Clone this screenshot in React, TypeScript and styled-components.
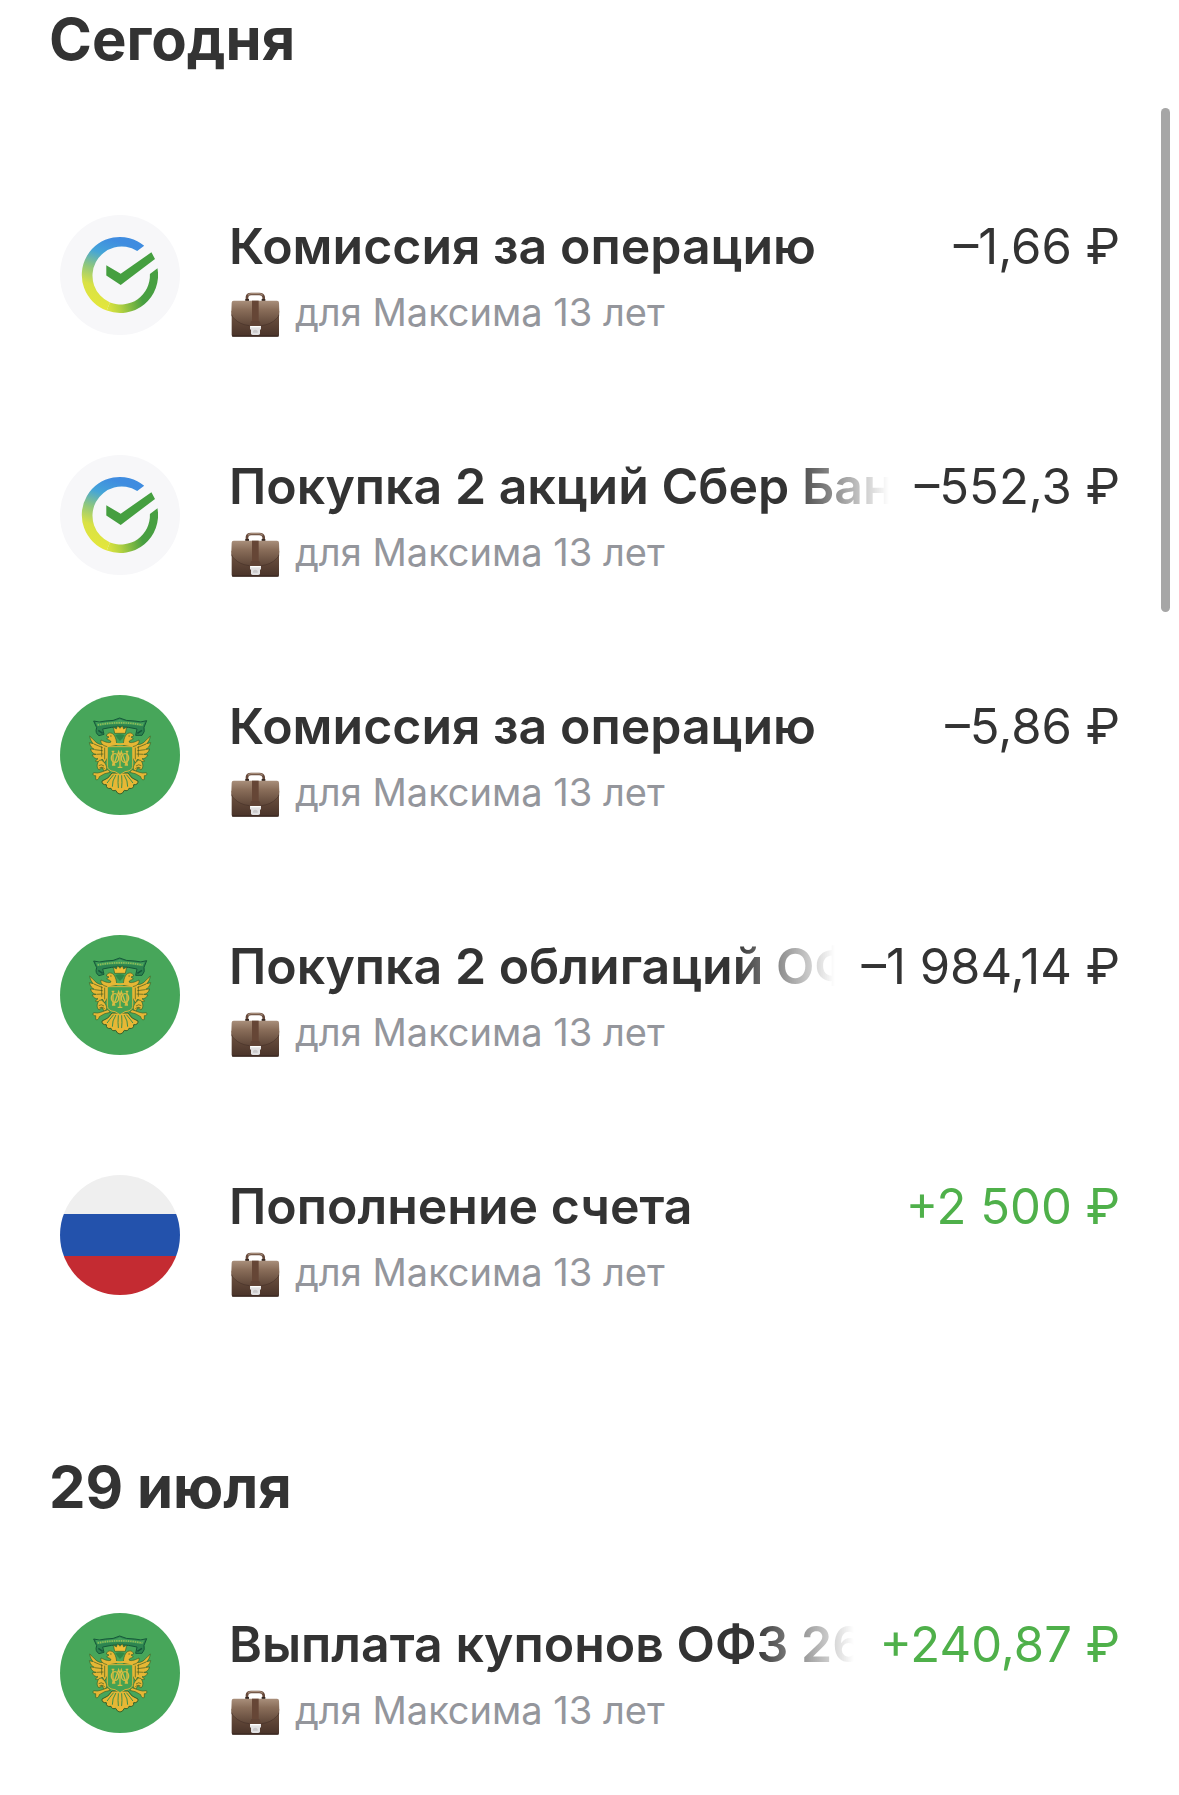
import React from 'react';
import styled, { createGlobalStyle } from 'styled-components';

type LogoKind = 'sber' | 'minfin' | 'flag';

interface Operation {
  id: number;
  logo: LogoKind;
  title: string;
  amount: string;
  income?: boolean;
  long?: boolean;
}

const today: Operation[] = [
  { id: 1, logo: 'sber', title: 'Комиссия за операцию', amount: '–1,66 ₽' },
  { id: 2, logo: 'sber', title: 'Покупка 2 акций Сбер Бан', amount: '–552,3 ₽', long: true },
  { id: 3, logo: 'minfin', title: 'Комиссия за операцию', amount: '–5,86 ₽' },
  { id: 4, logo: 'minfin', title: 'Покупка 2 облигаций ОФ', amount: '–1 984,14 ₽', long: true },
  { id: 5, logo: 'flag', title: 'Пополнение счета', amount: '+2 500 ₽', income: true },
];

const july: Operation[] = [
  { id: 6, logo: 'minfin', title: 'Выплата купонов ОФЗ 26', amount: '+240,87 ₽', income: true, long: true },
];

const GlobalStyle = createGlobalStyle`
  * {
    box-sizing: border-box;
  }

  body {
    margin: 0;
    background: #fff;
    color: #333;
    font-family: Inter, 'Liberation Sans', sans-serif;
  }
`;

const Page = styled.main`
  padding: 0 59px 0 49px;
`;

const Section = styled.section`
  & + & {
    margin-top: 93px;
  }
`;

const DateTitle = styled.h2<{ $gap: number }>`
  margin: 0 0 ${({ $gap }) => $gap}px;
  font-size: 58px;
  line-height: 78px;
  font-weight: 700;
`;

const List = styled.ul`
  margin: 0;
  padding: 0 0 0 11px;
  list-style: none;
`;

const Row = styled.li`
  display: flex;
  gap: 49px;
  padding: 60px 0 58px;
`;

const Avatar = styled.svg`
  flex: none;
  width: 120px;
  height: 120px;
  border-radius: 50%;
`;

const Info = styled.div`
  flex: 1;
  min-width: 0;
`;

const TopLine = styled.div`
  display: flex;
  justify-content: space-between;
  gap: 26px;
  margin-bottom: 8px;
  font-size: 49px;
  line-height: 62px;
  white-space: nowrap;
`;

const Title = styled.h3<{ $fade?: boolean }>`
  flex: 1;
  min-width: 0;
  margin: 0;
  overflow: hidden;
  font-size: 50px;
  font-weight: 600;
  ${({ $fade }) => $fade && 'mask-image: linear-gradient(to left, transparent, #000 100px);'}
`;

const Amount = styled.span<{ $income?: boolean }>`
  flex: none;
  line-height: 64px;
  color: ${({ $income }) => ($income ? '#4fb04a' : '#333')};
`;

const Account = styled.p`
  display: flex;
  align-items: flex-end;
  gap: 14px;
  margin: 0;
  color: #94969c;
  font-size: 38px;
  line-height: 50px;
`;

const Case = styled.svg`
  flex: none;
  width: 52px;
  height: 45px;
`;

const ScrollThumb = styled.div`
  position: fixed;
  top: 108px;
  right: 9px;
  width: 9px;
  height: 504px;
  border-radius: 5px;
  background: #a6a6a6;
`;

const SberLogo = () => (
  <Avatar viewBox="0 0 120 120" role="img" aria-label="Сбер">
    <defs>
      <linearGradient id="sberLeft" gradientUnits="userSpaceOnUse" x1="70" y1="24" x2="46" y2="94">
        <stop offset="0.08" stopColor="#3f8ce0" />
        <stop offset="0.3" stopColor="#45a5d8" />
        <stop offset="0.52" stopColor="#8fc77d" />
        <stop offset="0.75" stopColor="#d9e245" />
        <stop offset="1" stopColor="#e3e63c" />
      </linearGradient>
      <linearGradient id="sberRight" gradientUnits="userSpaceOnUse" x1="46" y1="94" x2="82" y2="86">
        <stop offset="0" stopColor="#e0e53e" />
        <stop offset="0.35" stopColor="#b6d341" />
        <stop offset="1" stopColor="#489f42" />
      </linearGradient>
    </defs>
    <rect width="120" height="120" fill="#f7f7f9" />
    <g transform="translate(0.7 0.3)">
      <path
        d="M83.5 30.5A38 38 0 1 0 46 95.3L49.3 87.2A29.2 29.2 0 1 1 76.5 35.7Z"
        fill="url(#sberLeft)"
      />
      <path d="M46 95.3A38 38 0 0 0 96.8 53L89.2 58.8A29.2 29.2 0 0 1 49.3 87.2Z" fill="url(#sberRight)" />
      <path d="M45.6 50L60 58.4 90.7 37 94.3 43.6 60 69.8 45.6 60.2Z" fill="#459f40" />
    </g>
  </Avatar>
);

const Wing = () => (
  <g>
    <g fill="#e6b735" stroke="#37602a" strokeWidth="2" strokeLinejoin="round">
      <path d="M178 180L150 178C136 174 130 162 119 153C121 165 125 171 130 176L118 173C121 185 127 190 133 193L121 192C125 203 131 207 138 208L126 210C131 219 138 222 144 221L136 228C145 232 152 228 157 222L164 234L174 216Z" />
      <path d="M148 226C140 235 139 247 147 255L156 248L163 259L170 252C171 240 163 231 154 225Z" />
      <path d="M152 262L142 264L131 263C127 268 130 273 137 272L137 283C143 287 147 280 148 275L164 266L181 262L174 254Z" />
      <path d="M200 181C200 164 195 147 183 144C174 142 171 148 169 153L177 156L170 161C177 167 181 164 183 171C175 176 162 169 153 165C150 174 159 183 173 185Z" />
    </g>
    <g fill="none" stroke="#3c5920" strokeWidth="2">
      <path d="M132 177L158 188M134 194L158 197M139 208L160 207M155 184L155 215M164 188L164 223" />
      <path d="M146 242Q154 236 162 243M148 249Q156 243 164 251M180 153L185 153" />
    </g>
  </g>
);

const MinfinLogo = () => (
  <Avatar viewBox="30 30 360 360" role="img" aria-label="Минфин">
    <rect x="30" y="30" width="360" height="360" fill="#47a65a" />
    <path
      d="M131 108Q147 114 166 108Q191 109 209 99Q228 109 254 108Q273 114 290 107L282 127Q286 141 276 151L257 151L261 132Q210 119 158 132L162 148L147 152Q134 144 140 128Z"
      fill="#2d8550"
      stroke="#16583a"
      strokeWidth="3"
      strokeLinejoin="round"
    />
    <path
      d="M137 111Q152 116 168 111Q194 111 209 103Q226 111 252 111Q268 116 284 111L278 124Q210 110 142 124Z"
      fill="#43a05a"
    />
    <path d="M143 120Q210 107 277 120" fill="none" stroke="#94bd57" strokeWidth="5" strokeDasharray="4 3" />
    <path d="M145 136L158 145M276 136L262 145" stroke="#16583a" strokeWidth="5" />
    <Wing />
    <g transform="matrix(-1 0 0 1 420 0)">
      <Wing />
    </g>
    <path
      d="M194 145L190 126L199 132L203 122L210 130L217 122L221 132L230 126L226 145Z"
      fill="#efbd36"
      stroke="#37602a"
      strokeWidth="2"
    />
    <path d="M196 150Q210 145 224 150L218 160L210 168L202 160Z" fill="#318845" />
    {/* tail feathers */}
    <path
      d="M186 264Q176 282 156 288Q155 300 169 299Q168 313 183 310Q186 320 197 316Q202 327 210 327Q218 327 223 316Q234 320 237 310Q252 313 251 299Q265 300 264 288Q244 282 234 264Z"
      fill="#e6b735"
      stroke="#37602a"
      strokeWidth="3"
      strokeLinejoin="round"
    />
    <g fill="none" stroke="#3f8f48" strokeWidth="3" strokeLinecap="round">
      <path d="M205 272Q203 294 205 308M215 272Q217 294 215 308M197 271Q186 288 187 304M223 271Q234 288 233 304M190 270Q178 284 172 293M230 270Q242 284 248 293" />
    </g>
    <path
      d="M172 185H248V244Q246 258 225 260L210 269L195 260Q174 258 172 244Z"
      fill="#45a252"
      stroke="#d7b33b"
      strokeWidth="3"
    />
    <path d="M172 184Q186 175 210 178Q234 175 248 184" fill="none" stroke="#e5b735" strokeWidth="6" />
    {/* monogram on the shield */}
    <g fill="none" stroke="#d9bd42" strokeWidth="4">
      <path d="M192 238L206 200L210 212L214 200L228 238M210 205V246M203 247H217M186 240H196M224 240H234M189 199V238M231 199V238M185 199H193M227 199H235" />
      <ellipse cx="195" cy="219" rx="11" ry="13" />
      <ellipse cx="225" cy="219" rx="11" ry="13" />
    </g>
  </Avatar>
);

const FlagLogo = () => (
  <Avatar viewBox="0 0 120 120" role="img" aria-label="Россия">
    <rect width="120" height="39" fill="#efefef" />
    <rect y="39" width="120" height="42" fill="#2352ac" />
    <rect y="81" width="120" height="39" fill="#c42b32" />
  </Avatar>
);

const Briefcase = () => (
  <Case viewBox="-6 -1 156 135" aria-hidden="true">
    <defs>
      <linearGradient id="caseFlap" x1="0" y1="0" x2="0" y2="1">
        <stop offset="0" stopColor="#a98f7b" />
        <stop offset="0.35" stopColor="#8a6e5a" />
        <stop offset="1" stopColor="#5d4537" />
      </linearGradient>
      <linearGradient id="caseBody" x1="0" y1="0" x2="0" y2="1">
        <stop offset="0" stopColor="#745744" />
        <stop offset="1" stopColor="#493329" />
      </linearGradient>
    </defs>
    <path d="M48 25V14Q49 5 60 5H85Q96 5 98 14V25" fill="none" stroke="#65483a" strokeWidth="8" />
    <path d="M51 9Q54 4 61 4H84Q91 4 95 9" fill="none" stroke="#a58b78" strokeWidth="4" />
    <path d="M43 23H54M92 23H103" stroke="#332722" strokeWidth="6" />
    <rect x="2" y="52" width="142" height="81" rx="5" fill="url(#caseBody)" />
    <path
      d="M8 25H138Q144 25 144 31L145 62Q144 74 137 79Q120 98 93 101H53Q26 98 9 79Q1 74 1 62L2 31Q2 25 8 25Z"
      fill="url(#caseFlap)"
    />
    <path d="M2 67Q4 76 10 79Q26 97 55 100H91Q120 97 136 79Q142 76 144 67" fill="none" stroke="#463027" strokeWidth="2" />
    <path d="M63 25H83V91H63Z" fill="#664636" />
    <path d="M55 102L61 86H85L91 102Z" fill="#604436" />
    <path d="M57 101H90V110L87 113V124Q86 128 81 128H66Q61 128 60 124V113L57 110Z" fill="#e2e1e2" />
    <path d="M66 116Q73 108 80 116V121H66Z" fill="#c9c7c9" />
    <path d="M58 103H89" stroke="#fff" strokeWidth="4" />
    <path d="M3 131H143" stroke="#34241e" strokeWidth="3" />
  </Case>
);

const logos = {
  sber: SberLogo,
  minfin: MinfinLogo,
  flag: FlagLogo,
};

const OperationRow = ({ operation }: { operation: Operation }) => {
  const Logo = logos[operation.logo];

  return (
    <Row>
      <Logo />
      <Info>
        <TopLine>
          <Title $fade={operation.long}>{operation.title}</Title>
          <Amount $income={operation.income}>{operation.amount}</Amount>
        </TopLine>
        <Account>
          <Briefcase />
          для Максима 13 лет
        </Account>
      </Info>
    </Row>
  );
};

const App = () => {
  return (
    <>
      <GlobalStyle />
      <Page>
        <Section>
          <DateTitle $gap={77}>Сегодня</DateTitle>
          <List>
            {today.map((item) => (
              <OperationRow key={item.id} operation={item} />
            ))}
          </List>
        </Section>
        <Section>
          <DateTitle $gap={27}>29 июля</DateTitle>
          <List>
            {july.map((item) => (
              <OperationRow key={item.id} operation={item} />
            ))}
          </List>
        </Section>
      </Page>
      <ScrollThumb />
    </>
  );
};

export default App;
